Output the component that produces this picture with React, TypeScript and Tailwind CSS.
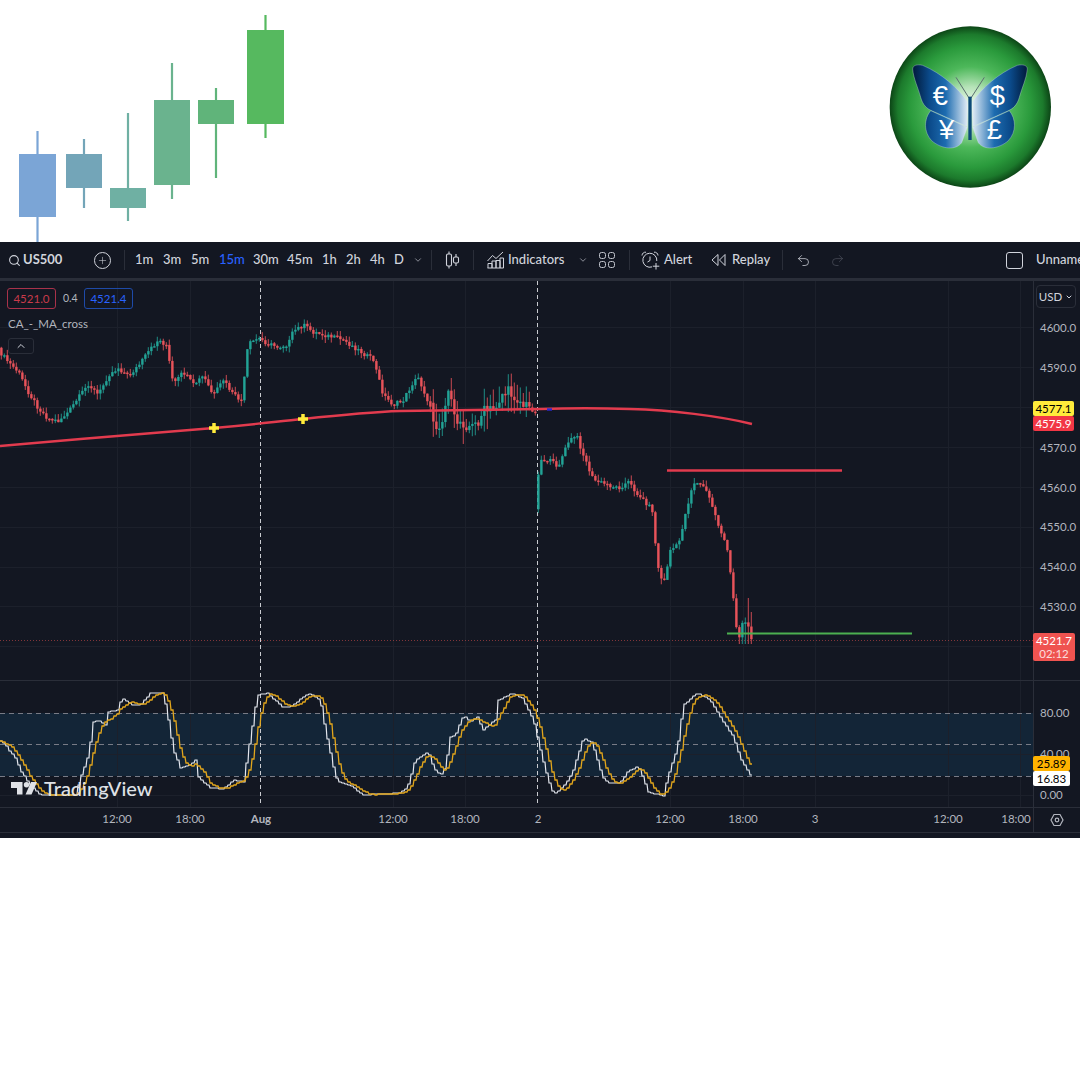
import { ChevronDown, ChevronUp, Plus, Redo2, Search, Undo2 } from "lucide-react";

type Pt = [number, number];

// close prices read off the picture, in page pixels
const priceKeys: Pt[] = [
  [0, 350], [10, 362], [20, 372], [30, 392], [40, 408], [50, 419], [60, 421], [70, 412], [80, 398], [90, 384],
  [100, 395], [110, 375], [120, 368], [130, 376], [140, 366], [150, 352], [160, 340], [168, 345], [175, 385],
  [185, 372], [195, 385], [205, 376], [215, 396], [225, 380], [235, 395], [245, 402], [247, 355], [252, 343],
  [260, 338], [270, 344], [280, 347], [290, 344], [295, 331], [305, 325], [315, 332], [330, 336], [345, 340],
  [360, 350], [375, 360], [385, 395], [395, 405], [405, 400], [415, 382], [420, 378], [430, 402], [437, 425],
  [445, 420], [450, 385], [455, 420], [465, 422], [475, 428], [485, 412], [495, 410], [505, 392], [515, 394],
  [525, 405], [535, 410], [537, 510], [541, 460], [550, 460], [560, 466], [570, 442], [578, 435], [585, 455],
  [595, 480], [610, 485], [620, 488], [630, 482], [640, 495], [650, 505], [655, 512], [658, 560], [665, 586],
  [672, 550], [680, 545], [688, 510], [695, 482], [705, 486], [712, 500], [720, 525], [728, 545], [733, 580],
  [737, 618], [740, 642], [743, 622], [746, 624], [749, 618], [752, 640],
];

const kKeys: Pt[] = [
  [0, 741], [5, 745], [10, 752], [15, 758], [20, 770], [25, 778], [30, 785], [40, 795], [75, 795], [80, 778],
  [88, 755], [93, 722], [97, 720], [105, 725], [108, 712], [118, 710], [121, 698], [132, 705], [140, 705],
  [150, 693], [163, 693], [168, 720], [173, 750], [180, 768], [190, 765], [195, 760], [198, 777], [210, 788],
  [223, 789], [233, 780], [243, 782], [248, 750], [257, 695], [267, 693], [283, 708], [293, 705], [308, 693],
  [320, 700], [325, 730], [333, 767], [337, 782], [350, 785], [362, 795], [400, 793], [407, 787], [415, 760],
  [428, 752], [433, 767], [440, 776], [445, 767], [450, 737], [455, 735], [463, 715], [470, 722], [477, 717],
  [483, 730], [497, 718], [498, 700], [512, 693], [522, 698], [533, 720], [540, 750], [547, 777], [553, 794],
  [563, 787], [572, 773], [583, 738], [592, 743], [602, 777], [608, 783], [620, 783], [627, 772], [638, 766],
  [648, 792], [663, 796], [667, 778], [677, 748], [683, 705], [697, 693], [710, 700], [722, 720], [733, 737],
  [740, 758], [752, 778],
];

const interp = (keys: Pt[], x: number) => {
  for (let i = 1; i < keys.length; i++) {
    if (x <= keys[i][0]) {
      const [x0, y0] = keys[i - 1];
      const [x1, y1] = keys[i];
      return y0 + ((y1 - y0) * (x - x0)) / (x1 - x0);
    }
  }
  return keys[keys.length - 1][1];
};

const noise = (n: number) => {
  const v = Math.sin(n * 12.9898) * 43758.5453;
  return v - Math.floor(v);
};

const candles = Array.from({ length: 251 }, (_, i) => {
  const x = i * 3;
  const busy = x > 430 && x < 530;
  const amp = busy ? 14 : 4.5;
  const open = interp(priceKeys, x) + (noise(i) - 0.5) * amp;
  // the session gap at "2": no candle bridges it
  const close = x === 534 ? open + 1 : interp(priceKeys, x + 3) + (noise(i + 1) - 0.5) * amp;
  let top = Math.min(open, close) - noise(i + 300) * (busy ? 18 : 6);
  let bottom = Math.max(open, close) + noise(i + 600) * (busy ? 18 : 6);
  if (x === 747) top = 598;
  if (x === 750) top = 612;
  if (x >= 738) bottom = Math.max(bottom, 644);
  return { x, open, close, top, bottom, up: close < open };
});

const kLine = Array.from({ length: 251 }, (_, i) => interp(kKeys, i * 3));
const dLine = kLine.map((_, i) => {
  const part = kLine.slice(Math.max(0, i - 4), i + 1);
  return part.reduce((a, b) => a + b, 0) / part.length;
});
const toSteps = (ys: number[]) =>
  ys.map((y, i) => `${i * 3},${Math.round(y)} ${i * 3 + 2},${Math.round(y)}`).join(" ");

const gridX = [117, 190, 393, 465, 670, 743, 815, 948, 1020];
const gridY = [327, 367, 407, 447, 487, 527, 567, 606, 646, 754, 795];
const prices = ["4600.0", "4590.0", "", "4570.0", "4560.0", "4550.0", "4540.0", "4530.0"];

function LogoCandles() {
  return (
    <svg width="300" height="242" viewBox="0 0 300 242" className="block">
      <path d="M37.500 131V242" stroke="#7ba5d6" strokeWidth="2.200" />
      <rect x="19" y="154" width="37" height="63" fill="#7ba5d6" />
      <path d="M84 139V208" stroke="#73a5b8" strokeWidth="2.200" />
      <rect x="66" y="154" width="36" height="34" fill="#73a5b8" />
      <path d="M128 113V221" stroke="#6fb0a3" strokeWidth="2.200" />
      <rect x="110" y="188" width="36" height="20" fill="#6fb0a3" />
      <path d="M172 63V199" stroke="#6ab38e" strokeWidth="2.200" />
      <rect x="154" y="100" width="36" height="85" fill="#6ab38e" />
      <path d="M216 88V178" stroke="#60b47a" strokeWidth="2.200" />
      <rect x="198" y="100" width="36" height="24" fill="#60b47a" />
      <path d="M265.500 15V138" stroke="#56b95f" strokeWidth="2.200" />
      <rect x="247" y="30" width="37" height="94" fill="#56b95f" />
    </svg>
  );
}

function Butterfly() {
  const upper = "M262 245C235 205 185 160 128 136C112 132 98 136 98 147C100 175 115 205 122 232C128 254 140 266 155 272L262 320Z";
  const lower = "M262 322L152 272C132 296 130 335 155 362C185 388 228 392 245 368Z";
  return (
    <svg width="180" height="175" viewBox="0 0 540 525" className="block">
      <defs>
        <radialGradient id="ball" cx="50%" cy="50%" r="50%">
          <stop offset="0" stopColor="#f2fbf2" />
          <stop offset="0.25" stopColor="#b6e3b8" />
          <stop offset="0.5" stopColor="#4db85a" />
          <stop offset="0.75" stopColor="#2a9a3c" />
          <stop offset="0.9" stopColor="#1c7a2c" />
          <stop offset="1" stopColor="#0c4516" />
        </radialGradient>
        <linearGradient id="wing" gradientUnits="userSpaceOnUse" x1="100" y1="0" x2="262" y2="0">
          <stop offset="0" stopColor="#011b3d" />
          <stop offset="0.3" stopColor="#0b4a8a" />
          <stop offset="0.6" stopColor="#1d6cb0" />
          <stop offset="1" stopColor="#dfeaf5" />
        </linearGradient>
      </defs>
      <circle cx="271" cy="261" r="242" fill="url(#ball)" />
      <g stroke="#dbe7f0" strokeWidth="1">
        <path d={upper} fill="url(#wing)" />
        <path d={lower} fill="url(#wing)" />
        <g transform="matrix(-1 0 0 1 540 0)">
          <path d={upper} fill="url(#wing)" />
          <path d={lower} fill="url(#wing)" />
        </g>
      </g>
      <path d="M267 234L228 172M273 234L313 172" stroke="#5b6f70" strokeWidth="3" fill="none" />
      <rect x="265" y="230" width="10" height="130" fill="#0c4a78" />
      <g fill="#ffffff" fontFamily="'Liberation Sans', sans-serif" fontSize="82" textAnchor="middle">
        <text x="181" y="254">€</text>
        <text x="352" y="256">$</text>
        <text x="200" y="358">¥</text>
        <text x="343" y="358">£</text>
      </g>
    </svg>
  );
}

function CandleIcon() {
  return (
    <svg width="15" height="18" viewBox="0 0 15 18" fill="none" stroke="#d1d4dc" strokeWidth="1.100">
      <path d="M4 0.500V3M4 15V17.500M11 3V6M11 12V15" />
      <rect x="1.500" y="3" width="5" height="12" rx="1.500" />
      <rect x="8.500" y="6" width="5" height="6" rx="1.500" />
    </svg>
  );
}

function IndicatorIcon() {
  return (
    <svg width="17" height="18" viewBox="0 0 17 18" fill="none" stroke="#d1d4dc" strokeWidth="1">
      <path d="M0.500 10L5.500 4.500L9 7.500L16 1" />
      <path d="M1 17V12.500H5V17M5 17V10H9V17M9 17V9.500H13V17M13 17V7H16.500V17M0.500 17H16.500" />
    </svg>
  );
}

function GridIcon() {
  return (
    <svg width="16" height="16" viewBox="0 0 16 16" fill="none" stroke="#c3c6ce" strokeWidth="1">
      <rect x="0.500" y="0.500" width="6" height="6" rx="2" />
      <rect x="9.500" y="0.500" width="6" height="6" rx="2" />
      <rect x="0.500" y="9.500" width="6" height="6" rx="2" />
      <rect x="9.500" y="9.500" width="6" height="6" rx="2" />
    </svg>
  );
}

function AlarmIcon() {
  return (
    <svg width="19" height="19" viewBox="0 0 19 19" fill="none" stroke="#d1d4dc" strokeWidth="1">
      <path d="M11 15.900A7 7 0 1 1 15.800 10" />
      <path d="M9 5.500V9.500L6.500 11" />
      <path d="M1 4.500C1 2.500 3 0.800 5 1.200M17 4.500C17 2.500 15 0.800 13 1.200" />
      <path d="M15 12V18.500M11.800 15.200H18.300" />
    </svg>
  );
}

function ReplayIcon() {
  return (
    <svg width="15" height="14" viewBox="0 0 15 14" fill="none" stroke="#d1d4dc" strokeWidth="1">
      <path d="M7 1.500L1 7L7 12.500Z" />
      <path d="M14 1.500L8.500 7L14 12.500Z" />
    </svg>
  );
}

function Toolbar() {
  return (
    <div className="flex h-[36px] shrink-0 items-center overflow-hidden whitespace-nowrap bg-[#131722] pl-[8px] text-[13px] font-medium text-[#d1d4dc]">
      <Search className="h-[13px] w-[13px] shrink-0" strokeWidth={2} />
      <span className="ml-[2px] w-[37px] shrink-0 font-bold">US500</span>
      <span className="ml-[34px] flex h-[17px] w-[17px] shrink-0 items-center justify-center rounded-full border border-[#d1d4dc]">
        <Plus className="h-[11px] w-[11px]" strokeWidth={1.200} />
      </span>
      <span className="ml-[13px] h-[20px] w-px shrink-0 bg-[#2a2e39]" />
      <span className="ml-[10px] w-[17px] shrink-0 text-center">1m</span>
      <span className="ml-[11px] w-[17px] shrink-0 text-center">3m</span>
      <span className="ml-[11px] w-[17px] shrink-0 text-center">5m</span>
      <span className="ml-[11px] w-[23px] shrink-0 text-center text-[#2962ff]">15m</span>
      <span className="ml-[11px] w-[23px] shrink-0 text-center">30m</span>
      <span className="ml-[11px] w-[23px] shrink-0 text-center">45m</span>
      <span className="ml-[12px] w-[14px] shrink-0 text-center">1h</span>
      <span className="ml-[10px] w-[14px] shrink-0 text-center">2h</span>
      <span className="ml-[10px] w-[14px] shrink-0 text-center">4h</span>
      <span className="ml-[10px] w-[8px] shrink-0 text-center">D</span>
      <ChevronDown className="ml-[11px] h-[10px] w-[10px] shrink-0" strokeWidth={1.500} />
      <span className="ml-[8px] h-[20px] w-px shrink-0 bg-[#2a2e39]" />
      <span className="ml-[13px] shrink-0"><CandleIcon /></span>
      <span className="ml-[13px] h-[20px] w-px shrink-0 bg-[#2a2e39]" />
      <span className="ml-[13px] shrink-0"><IndicatorIcon /></span>
      <span className="ml-[4px] w-[56px] shrink-0 text-center">Indicators</span>
      <ChevronDown className="ml-[14px] h-[10px] w-[10px] shrink-0" strokeWidth={1.500} />
      <span className="ml-[11px] shrink-0"><GridIcon /></span>
      <span className="ml-[14px] h-[20px] w-px shrink-0 bg-[#2a2e39]" />
      <span className="ml-[11px] shrink-0"><AlarmIcon /></span>
      <span className="ml-[4px] w-[28px] shrink-0 text-center">Alert</span>
      <span className="ml-[19px] shrink-0"><ReplayIcon /></span>
      <span className="ml-[6px] w-[38px] shrink-0 text-center">Replay</span>
      <span className="ml-[12px] h-[20px] w-px shrink-0 bg-[#2a2e39]" />
      <Undo2 className="ml-[13px] h-[15px] w-[15px] shrink-0" strokeWidth={1.200} />
      <Redo2 className="ml-[19px] h-[15px] w-[15px] shrink-0 text-[#4a4e59]" strokeWidth={1.200} />
      <span className="ml-[161px] h-[17px] w-[17px] shrink-0 rounded-[3px] border border-[#d1d4dc]" />
      <span className="ml-[13px] shrink-0">Unnamed</span>
    </div>
  );
}

function ChartSvg() {
  return (
    <svg width="1033" height="526" viewBox="0 281 1033 526" className="block">
      <rect x="0" y="713" width="1033" height="63" fill="#132537" />
      <g stroke="#1c202b" strokeWidth="1">
        {gridX.map((x) => (
          <path key={x} d={`M${x + 0.5} 281V807`} />
        ))}
        {gridY.map((y) => (
          <path key={y} d={`M0 ${y + 0.5}H1033`} />
        ))}
      </g>
      <path d="M0 680.500H1033" stroke="#2a2e39" />
      <path d="M0 713.500H1033M0 744.500H1033M0 776.500H1033" stroke="#787b86" strokeDasharray="5 4" />
      <path d="M260.500 281V805M537.500 281V805" stroke="#c9cbd0" strokeDasharray="4 3" />
      <path d="M0 640.500H1033" stroke="#ef5350" strokeOpacity="0.500" strokeDasharray="1 2" />

      {candles.map((c) => (
        <g key={c.x} fill={c.up ? "#22a396" : "#e8535a"}>
          <rect x={c.x + 0.750} y={c.top} width="1.200" height={c.bottom - c.top} opacity="0.700" />
          <rect x={c.x + 0.200} y={Math.min(c.open, c.close)} width="2.400" height={Math.max(Math.abs(c.close - c.open), 1.500)} />
        </g>
      ))}

      <path
        d="M0 446C70 440 150 433 214 428C260 424 280 421 303 419C340 415 370 412 400 411C460 410 500 410 540 409C570 408 600 408 630 409C670 410 720 416 752 424"
        fill="none"
        stroke="#e23b4e"
        strokeWidth="2.400"
      />
      <path d="M667 470.500H842" stroke="#e23b4e" strokeWidth="2.400" />
      <path d="M727 633.500H912" stroke="#4caf50" strokeWidth="2.200" />
      <path d="M547 409.500H552" stroke="#2a2ad0" strokeWidth="2.400" />
      <path d="M214 423V433M209 428H219M303 414V424M298 419H308" stroke="#ffeb3b" strokeWidth="3.500" />

      <polyline points={toSteps(kLine)} fill="none" stroke="#e4e7ee" strokeWidth="1.200" />
      <polyline points={toSteps(dLine)} fill="none" stroke="#e2a61c" strokeWidth="1.300" />
    </svg>
  );
}

function Legend() {
  return (
    <div className="absolute left-[7px] top-[7px] flex flex-col items-start text-[11.500px] text-[#b2b5be]">
      <div className="flex items-center">
        <span className="flex h-[21px] w-[49px] items-center justify-center rounded-[3px] border border-[#a8324a] text-[#c93a4a]">4521.0</span>
        <span className="ml-[7px] w-[14px] text-center text-[10.500px]">0.4</span>
        <span className="ml-[7px] flex h-[21px] w-[49px] items-center justify-center rounded-[3px] border border-[#1e4aa8] text-[#2962ff]">4521.4</span>
      </div>
      <span className="ml-[1px] mt-[7px] leading-[16px]">CA_-_MA_cross</span>
      <span className="ml-[1px] mt-[6px] flex h-[16px] w-[26px] items-center justify-center rounded-[3px] border border-[#2a2e39]">
        <ChevronUp className="h-[12px] w-[12px] text-[#d1d4dc]" strokeWidth={2} />
      </span>
    </div>
  );
}

function Watermark() {
  return (
    <div className="absolute left-[11px] top-[497px] flex items-center gap-[7px] text-[#dfe1e6]">
      <svg width="26" height="13" viewBox="0 0 26 13" fill="currentColor">
        <path d="M0 0H11.500V12.500H6V6H0Z" />
        <circle cx="15.500" cy="2.800" r="2.700" />
        <path d="M26 0L20.500 12.500H14.500L20 0Z" />
      </svg>
      <span className="text-[20px] font-medium leading-[20px]">TradingView</span>
    </div>
  );
}

function PriceAxis() {
  return (
    <div className="relative h-[526px] w-[47px] border-l border-[#2a2e39] text-[11.500px] text-[#b2b5be]">
      <span className="absolute left-[2px] top-[4px] flex h-[23px] w-[40px] items-center justify-center gap-[3px] rounded-[4px] border border-[#2a2e39] bg-[#131722] text-[#d1d4dc]">
        USD
        <ChevronDown className="h-[8px] w-[8px]" strokeWidth={3} />
      </span>
      <div className="flex flex-col pl-[6px] pt-[27px]">
        {prices.map((p, i) => (
          <span key={i} className="h-[39.900px] leading-[40px]">{p}</span>
        ))}
      </div>
      <span className="absolute -left-px top-[120px] flex h-[15px] w-[41px] items-center justify-center rounded-[2px] bg-[#ffeb3b] text-black">4577.1</span>
      <span className="absolute -left-px top-[135px] flex h-[15px] w-[41px] items-center justify-center rounded-[2px] bg-[#f23645] text-white">4575.9</span>
      <span className="absolute -left-px top-[352px] flex h-[28px] w-[42px] flex-col items-center justify-center rounded-[2px] bg-[#ef5350] leading-[13px] text-white">
        <span>4521.7</span>
        <span className="opacity-80">02:12</span>
      </span>
      <span className="absolute left-0 right-0 top-[399px] h-px bg-[#2a2e39]" />
      <span className="absolute left-[6px] top-[424px] leading-[16px]">80.00</span>
      <span className="absolute left-[6px] top-[465px] leading-[16px]">40.00</span>
      <span className="absolute -left-px top-[475px] flex h-[15px] w-[37px] items-center justify-center rounded-[2px] bg-[#ffb300] text-black">25.89</span>
      <span className="absolute -left-px top-[490px] flex h-[15px] w-[37px] items-center justify-center rounded-[2px] bg-white text-black">16.83</span>
      <span className="absolute left-[6px] top-[506px] leading-[16px]">0.00</span>
    </div>
  );
}

function TimeAxis() {
  return (
    <div className="flex h-[26px] items-center border-y border-[#2a2e39] text-[11.500px] text-[#b2b5be]">
      <div className="flex w-[1033px] shrink-0 items-center pb-[2px]">
        <span className="ml-[97px] w-[40px] shrink-0 text-center">12:00</span>
        <span className="ml-[33px] w-[40px] shrink-0 text-center">18:00</span>
        <span className="ml-[31px] w-[40px] shrink-0 text-center font-bold">Aug</span>
        <span className="ml-[92px] w-[40px] shrink-0 text-center">12:00</span>
        <span className="ml-[32px] w-[40px] shrink-0 text-center">18:00</span>
        <span className="ml-[33px] w-[40px] shrink-0 text-center">2</span>
        <span className="ml-[92px] w-[40px] shrink-0 text-center">12:00</span>
        <span className="ml-[33px] w-[40px] shrink-0 text-center">18:00</span>
        <span className="ml-[32px] w-[40px] shrink-0 text-center">3</span>
        <span className="ml-[93px] w-[40px] shrink-0 text-center">12:00</span>
        <span className="ml-[32px] w-[32px] shrink-0 text-center">18:00</span>
      </div>
      <span className="flex h-full flex-1 items-center justify-center border-l border-[#2a2e39]">
        <svg width="14" height="14" viewBox="0 0 14 14" fill="none" stroke="#b2b5be" strokeWidth="1.200">
          <path d="M4 1.500H10L13 7L10 12.500H4L1 7Z" />
          <circle cx="7" cy="7" r="1.800" />
        </svg>
      </span>
    </div>
  );
}

export default function App() {
  return (
    <div className="flex h-[1080px] w-[1080px] flex-col overflow-hidden bg-white font-['Lato',sans-serif]">
      <div className="flex h-[242px] shrink-0 justify-between pr-[20px] pt-[20px]">
        <div className="-mt-[20px]">
          <LogoCandles />
        </div>
        <Butterfly />
      </div>
      <div className="flex h-[596px] shrink-0 flex-col bg-[#131722]">
        <Toolbar />
        <div className="h-[3px] shrink-0 bg-[#2a2e39]" />
        <div className="flex">
          <div className="relative h-[526px] w-[1033px]">
            <ChartSvg />
            <Legend />
            <Watermark />
          </div>
          <PriceAxis />
        </div>
        <TimeAxis />
      </div>
    </div>
  );
}
